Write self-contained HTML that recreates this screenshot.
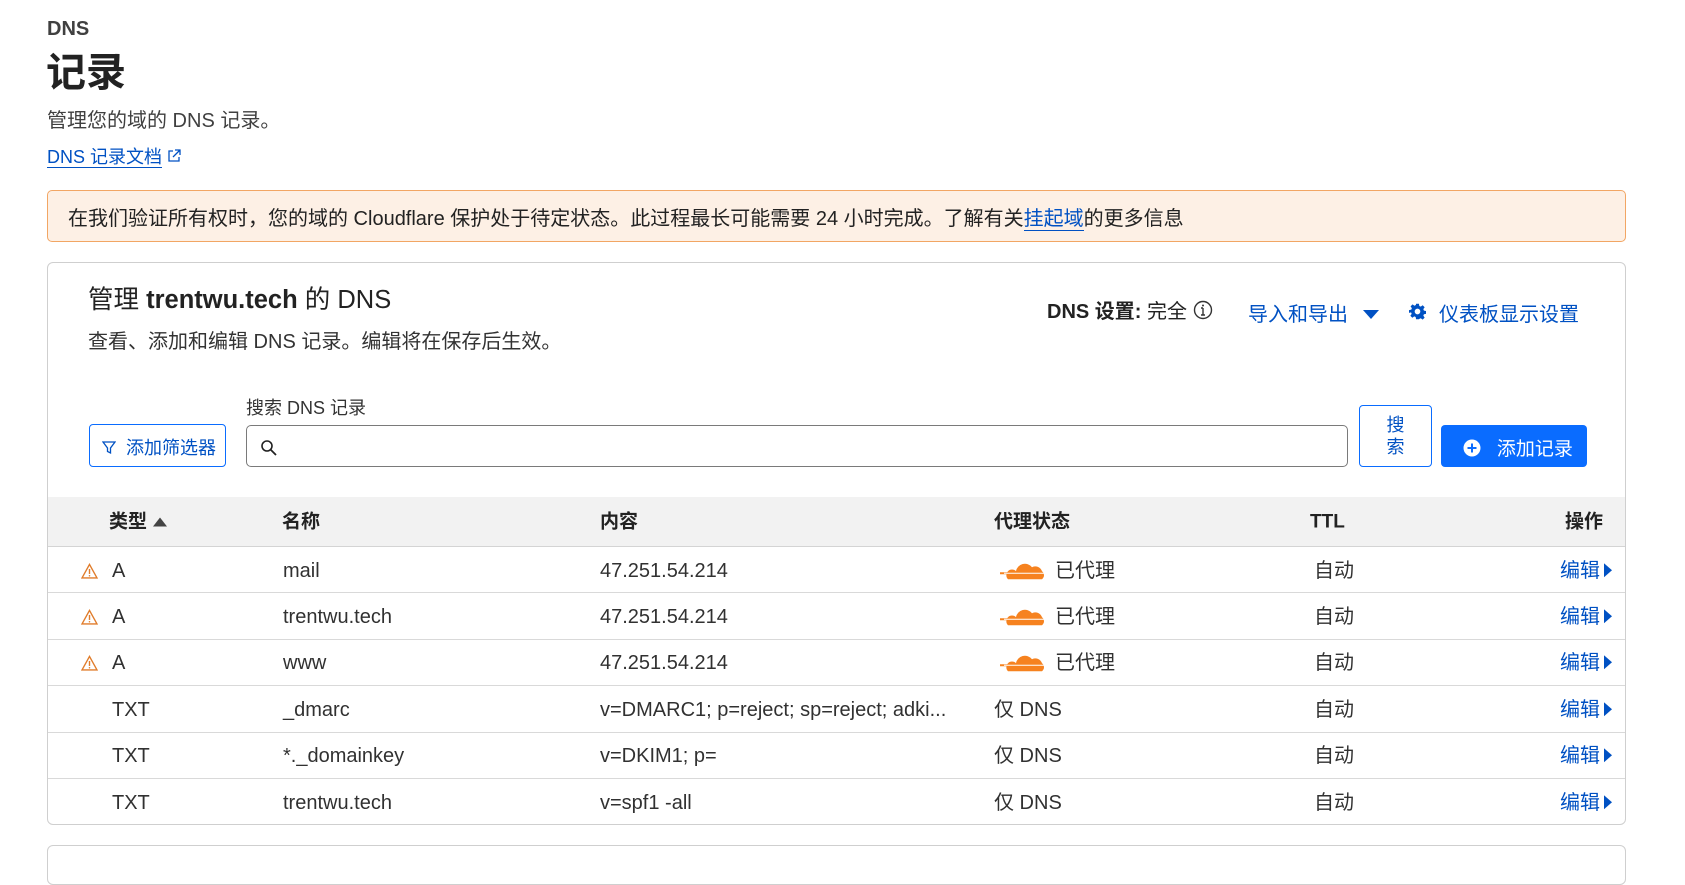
<!DOCTYPE html>
<html><head><meta charset="utf-8"><style>
*{box-sizing:border-box;margin:0;padding:0}
body{width:1685px;height:868px;overflow:hidden;background:#fff;font-family:"Liberation Sans","Noto Sans CJK SC",sans-serif;color:#313131;position:relative}
.a{position:absolute;white-space:nowrap}
.blue{color:#0051c3}
.row{position:absolute;left:48px;width:1577px;height:46.4px;border-bottom:1px solid #d9d9d9;font-size:20px}
.row .a{top:50%;transform:translateY(-44%);line-height:1}
.hd .a{top:50%;transform:translateY(-50%);line-height:1}
</style></head><body>
<div class="a" style="left:47px;top:18px;font-size:20px;font-weight:bold;color:#404040">DNS</div>
<div class="a" style="left:46px;top:40px;font-size:40px;font-weight:bold;color:#222">记录</div>
<div class="a" style="left:47px;top:104px;font-size:20px;color:#404040">管理您的域的 DNS 记录。</div>
<div class="a blue" style="left:47px;top:143px;font-size:18px"><span style="border-bottom:1.5px solid #0051c3">DNS 记录文档</span> <svg width="14" height="14" viewBox="0 0 14 14" style="vertical-align:0"><path d="M6 2H2v10h10V8M8 1h5v5M13 1L6 8" fill="none" stroke="#0051c3" stroke-width="1.3"/></svg></div>
<div class="a" style="left:47px;top:190px;width:1579px;height:52px;background:#fdf0e5;border:1px solid #f2a664;border-radius:5px;font-size:20px;color:#222;padding:11px 0 0 20px">在我们验证所有权时，您的域的 Cloudflare 保护处于待定状态。此过程最长可能需要 24 小时完成。了解有关<span class="blue" style="border-bottom:1.5px solid #0051c3">挂起域</span>的更多信息</div>
<div class="a" style="left:47px;top:262px;width:1579px;height:563px;border:1px solid #cfcfcf;border-radius:6px"></div>
<div class="a" style="left:88px;top:279px;font-size:25.5px;color:#222">管理 <b>trentwu.tech</b> 的 DNS</div>
<div class="a" style="left:88px;top:325px;font-size:20px;color:#333">查看、添加和编辑 DNS 记录。编辑将在保存后生效。</div>
<div class="a" style="left:1047px;top:295px;font-size:20px;color:#222"><b>DNS 设置:</b> 完全 <svg width="20" height="20" viewBox="0 0 20 20" style="vertical-align:-2px"><circle cx="10" cy="10" r="8.5" fill="none" stroke="#333" stroke-width="1.4"/><path d="M10 8v7M8 15h4M8 8h2" stroke="#333" stroke-width="1.4" fill="none"/><circle cx="10" cy="5.5" r="1" fill="#333"/></svg></div>
<div class="a blue" style="left:1248px;top:298px;font-size:20px">导入和导出 <svg width="18" height="12" viewBox="0 0 18 12" style="margin-left:8px"><path d="M1 1h16L9 10z" fill="#0051c3"/></svg></div>
<svg class="a" style="left:1409px;top:303px" width="17" height="17" viewBox="0 0 24 24"><path fill="#0051c3" d="M10 1h4l.6 3.2 2 .9 2.7-1.9 2.8 2.8-1.9 2.7.9 2 3.2.6v4l-3.2.6-.9 2 1.9 2.7-2.8 2.8-2.7-1.9-2 .9L14 23h-4l-.6-3.2-2-.9-2.7 1.9-2.8-2.8 1.9-2.7-.9-2L0 14v-4l3.2-.6.9-2-1.9-2.7 2.8-2.8 2.7 1.9 2-.9zM12 8a4 4 0 1 0 0 8 4 4 0 0 0 0-8z"/></svg>
<div class="a blue" style="left:1439px;top:298px;font-size:20px">仪表板显示设置</div>
<div class="a" style="left:246px;top:394px;font-size:18px;color:#333">搜索 DNS 记录</div>
<div class="a blue" style="left:89px;top:424px;width:137px;height:43px;border:1px solid #0a6cff;border-radius:4px;font-size:18px;padding:9px 0 0 12px"><svg width="14" height="14" viewBox="0 0 14 14" style="vertical-align:-1px"><path d="M1 1h12L8.5 7v5l-3-1.5V7z" fill="none" stroke="#0051c3" stroke-width="1.3"/></svg> &nbsp;添加筛选器</div>
<div class="a" style="left:246px;top:425px;width:1102px;height:42px;border:1px solid #7a7a7a;border-radius:5px"><svg width="18" height="18" viewBox="0 0 18 18" style="position:absolute;left:13px;top:13px"><circle cx="7" cy="7" r="5" fill="none" stroke="#222" stroke-width="1.6"/><path d="M11 11l5 5" stroke="#222" stroke-width="1.8"/></svg></div>
<div class="a blue" style="left:1359px;top:405px;width:73px;height:62px;border:1px solid #0a6cff;border-radius:4px;font-size:18px;line-height:22px;text-align:center;padding-top:8px;white-space:normal">搜<br>索</div>
<div class="a" style="left:1441px;top:425px;width:146px;height:42px;background:#0a6cff;border-radius:4px;color:#fff;font-size:19px;padding:9px 0 0 22px"><svg width="18" height="18" viewBox="0 0 18 18" style="vertical-align:-2px"><circle cx="9" cy="9" r="8.5" fill="#fff"/><path d="M9 4.5v9M4.5 9h9" stroke="#0a6cff" stroke-width="2"/></svg>&nbsp;&nbsp; 添加记录</div>
<div class="a hd" style="left:48px;top:497px;width:1577px;height:50px;background:#f2f2f2;border-bottom:1px solid #d4d4d4;font-size:19px;font-weight:bold;color:#222">
<div class="a" style="left:61px">类型 <svg width="16" height="12" viewBox="0 0 16 12"><path d="M1 11h14L8 2z" fill="#444"/></svg></div>
<div class="a" style="left:234px">名称</div>
<div class="a" style="left:552px">内容</div>
<div class="a" style="left:946px">代理状态</div>
<div class="a" style="left:1262px">TTL</div>
<div class="a" style="left:1517px">操作</div>
</div>
<div id="rows"></div>
<div class="a" style="left:47px;top:845px;width:1579px;height:40px;border:1px solid #cfcfcf;border-radius:6px"></div>
<script>
var d=[["A","mail","47.251.54.214",1],["A","trentwu.tech","47.251.54.214",1],["A","www","47.251.54.214",1],["TXT","_dmarc","v=DMARC1; p=reject; sp=reject; adki...",0],["TXT","*._domainkey","v=DKIM1; p=",0],["TXT","trentwu.tech","v=spf1 -all",0]];
var h="";
d.forEach(function(r,i){var t=547+i*46.4;
h+='<div class="row" style="top:'+t+'px;'+(i==5?'border-bottom:none':'')+'">'+(r[3]?'<svg class="a" style="left:33px" width="17" height="16" viewBox="0 0 17 16"><path d="M8.5 1.5L16 15H1z" fill="none" stroke="#e07c2b" stroke-width="1.4"/><path d="M8.5 6v5" stroke="#e07c2b" stroke-width="1.4"/><circle cx="8.5" cy="12.8" r=".8" fill="#e07c2b"/></svg>':'')+
'<div class="a" style="left:64px">'+r[0]+'</div><div class="a" style="left:235px">'+r[1]+'</div><div class="a" style="left:552px">'+r[2]+'</div>'+
(r[3]?'<svg class="a" style="left:952px" width="46" height="20" viewBox="0 0 46 20"><path d="M0 12h16" stroke="#f6821f" stroke-width="2"/><path d="M8 18h34a5 5 0 0 0 0-8 7 7 0 0 0-10-4 9 9 0 0 0-16 4 5 5 0 0 0-8 8z" fill="#f6821f"/><path d="M4 12h40" stroke="#fff" stroke-width="1"/></svg><div class="a" style="left:1007px">已代理</div>':'<div class="a" style="left:946px">仅 DNS</div>')+
'<div class="a" style="left:1266px">自动</div><div class="a blue" style="left:1512px">编辑<svg width="9" height="14" viewBox="0 0 9 14" style="margin-left:3px"><path d="M1 0l8 7-8 7z" fill="#0051c3"/></svg></div></div>';});
document.getElementById("rows").innerHTML=h;
</script>
</body></html>
